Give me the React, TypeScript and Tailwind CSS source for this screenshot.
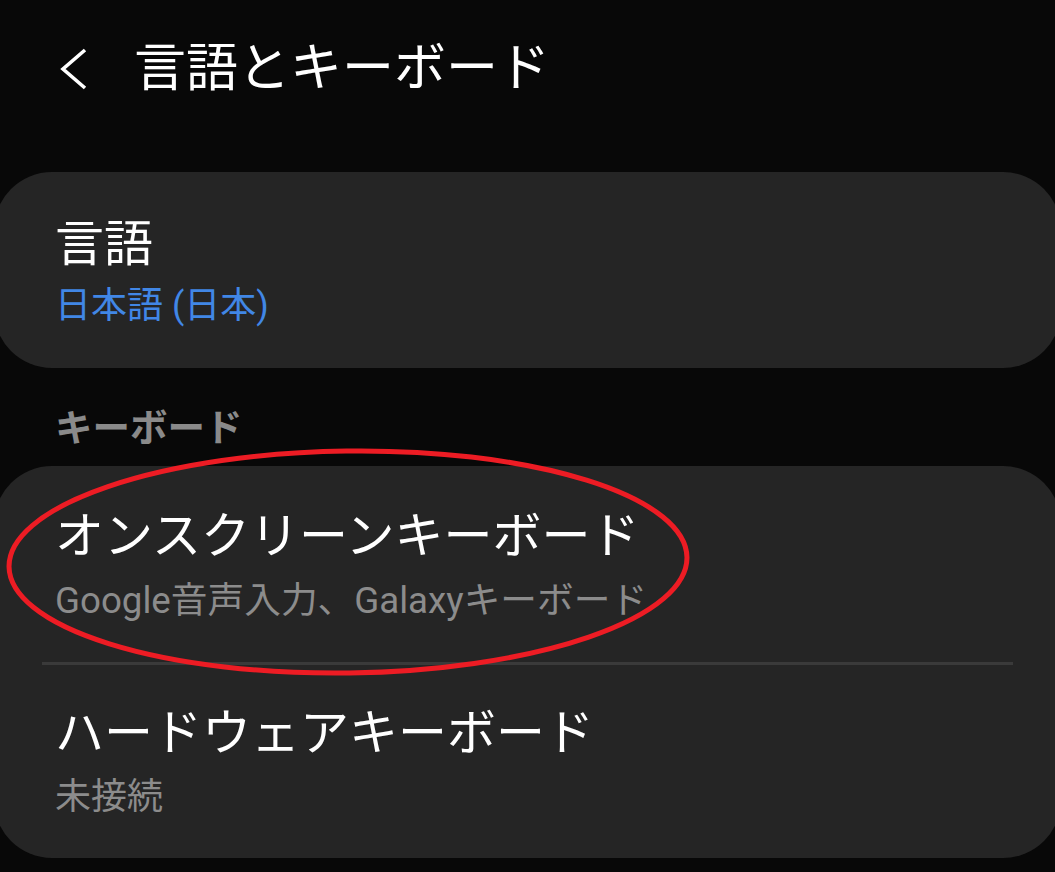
import React from "react";

const font = { fontFamily: 'Roboto, "Noto Sans CJK JP", sans-serif' };

export default function App() {
  return (
    <div
      className="relative w-[1055px] h-[872px] overflow-hidden bg-[#080808] text-white"
      style={font}
    >
      {/* Header */}
      <div className="flex items-center h-[138px] pl-[56px]">
        <svg width="34" height="44" viewBox="0 0 34 44" className="shrink-0">
          <path
            d="M29 3 L7 22 L29 41"
            fill="none"
            stroke="#ffffff"
            strokeWidth="3.6"
            strokeLinecap="butt"
            strokeLinejoin="miter"
          />
        </svg>
        <div className="ml-[44px] text-[52px] leading-[60px]">
          言語とキーボード
        </div>
      </div>

      {/* Card 1 */}
      <div className="mt-[34px] mx-[-6px] h-[196px] rounded-[58px] bg-[#252525] pl-[61px] pt-[44px]">
        <div className="text-[49px] leading-[58px]">言語</div>
        <div className="mt-[10px] text-[36px] leading-[44px] text-[#4187e6]">
          日本語 (日本)
        </div>
      </div>

      {/* Section label */}
      <div className="mt-[38px] pl-[55px] text-[37.5px] leading-[44px] font-bold text-[#8a8a8a]">
        キーボード
      </div>

      {/* Card 2 */}
      <div className="mt-[16px] mx-[-6px] h-[392px] rounded-[58px] bg-[#252525]">
        <div className="pl-[61px] pt-[42px]">
          <div className="text-[49px] leading-[58px]">オンスクリーンキーボード</div>
          <div className="mt-[13px] text-[36.7px] leading-[44px] text-[#8c8c8c]">
            Google音声入力、Galaxyキーボード
          </div>
        </div>
        <div className="mt-[39px] mx-[48px] h-[3px] bg-[#3a3a3a]" />
        <div className="pl-[61px] pt-[40px]">
          <div className="text-[49px] leading-[58px]">ハードウェアキーボード</div>
          <div className="mt-[12px] text-[36px] leading-[44px] text-[#8c8c8c]">
            未接続
          </div>
        </div>
      </div>

      {/* Red annotation ellipse */}
      <svg
        className="absolute left-0 top-0 pointer-events-none"
        width="1055"
        height="872"
        viewBox="0 0 1055 872"
      >
        <ellipse
          cx="348"
          cy="562"
          rx="339"
          ry="111"
          fill="none"
          stroke="#ed1c24"
          strokeWidth="5"
          transform="rotate(-0.8 348 562)"
        />
      </svg>
    </div>
  );
}
